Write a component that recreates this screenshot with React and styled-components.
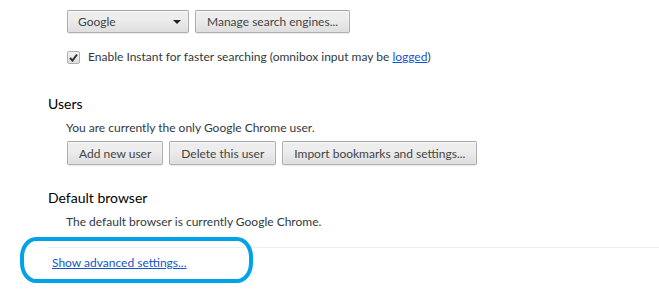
import React from 'react';
import styled, { createGlobalStyle } from 'styled-components';

const Global = createGlobalStyle`
  body { margin: 0; background: #fff; }
  * { box-sizing: border-box; }
`;

const Page = styled.div`
  position: relative;
  width: 659px;
  height: 297px;
  overflow: hidden;
  font-family: Lato, "Noto Sans", sans-serif;
  font-size: 12px;
  color: #303942;
`;

const Shift = styled.div`
  margin-top: -15px;
`;

const Section = styled.section`
  padding-left: 48px;
  margin-top: ${(p) => p.gap || 0}px;
`;

const Heading = styled.h3`
  margin: 0;
  font-size: 14px;
  font-weight: normal;
  line-height: 18px;
  color: #000;
`;

const Content = styled.div`
  padding-left: 18px;
  margin-top: ${(p) => p.gap || 0}px;
`;

const Desc = styled.div`
  line-height: 16px;
`;

const Row = styled.div`
  display: flex;
  gap: ${(p) => p.gap || 6}px;
  margin-top: ${(p) => p.top || 0}px;
  padding-left: 1px;
`;

const Button = styled.button`
  height: ${(p) => p.h || 24}px;
  padding: 0 11px;
  font-family: inherit;
  font-size: 12px;
  color: #444;
  border: 1px solid rgba(0, 0, 0, 0.25);
  border-radius: 2px;
  background: linear-gradient(#ededed, #ededed 38%, #dedede);
  box-shadow: 0 1px 0 rgba(0, 0, 0, 0.08), inset 0 1px 2px rgba(255, 255, 255, 0.75);
`;

const Select = styled.div`
  display: flex;
  align-items: center;
  justify-content: space-between;
  width: 122px;
  height: 23px;
  padding: 0 7px 0 10px;
  color: #444;
  border: 1px solid rgba(0, 0, 0, 0.25);
  border-radius: 2px;
  background: linear-gradient(#ededed, #ededed 38%, #dedede);
  box-shadow: 0 1px 0 rgba(0, 0, 0, 0.08), inset 0 1px 2px rgba(255, 255, 255, 0.75);
`;

const Arrow = styled.span`
  width: 0;
  height: 0;
  border-left: 4px solid transparent;
  border-right: 4px solid transparent;
  border-top: 4px solid #222;
`;

const CheckRow = styled.label`
  display: flex;
  align-items: center;
  gap: 8px;
  margin-top: 16px;
  padding-left: 1px;
  line-height: 16px;
`;

const Box = styled.span`
  width: 13px;
  height: 13px;
  border: 1px solid #b0b0b0;
  border-radius: 2px;
  background: linear-gradient(#f4f4f4, #dedede);
  display: flex;
  align-items: center;
  justify-content: center;
`;

const Link = styled.a`
  color: #15c;
  text-decoration: underline;
  cursor: pointer;
`;

const Footer = styled.div`
  margin: 17px 0 0 48px;
  border-top: 1px solid #eee;
  padding: 7px 0 0 4px;
  line-height: 16px;
`;

const Highlight = styled.div`
  position: absolute;
  left: 20px;
  top: 237px;
  width: 233px;
  height: 46px;
  border: 4px solid #00a2e8;
  border-radius: 16px / 20px;
  pointer-events: none;
`;

export default function App() {
  return (
    <Page>
      <Global />
      <Shift>
        <Section>
          <Content>
            <Desc>Set which search engine is used when searching from the omnibox.</Desc>
            <Row top={9}>
              <Select>
                <span>Google</span>
                <Arrow />
              </Select>
              <Button h={23}>Manage search engines...</Button>
            </Row>
            <CheckRow>
              <Box>
                <svg width="9" height="9" viewBox="0 0 9 9">
                  <path d="M1 5 L3.5 7.5 L8 1.5" fill="none" stroke="#333" strokeWidth="2" />
                </svg>
              </Box>
              <span>
                Enable Instant for faster searching (omnibox input may be <Link>logged</Link>)
              </span>
            </CheckRow>
          </Content>
        </Section>
        <Section gap={30}>
          <Heading>Users</Heading>
          <Content gap={7}>
            <Desc>You are currently the only Google Chrome user.</Desc>
            <Row top={5}>
              <Button>Add new user</Button>
              <Button>Delete this user</Button>
              <Button>Import bookmarks and settings...</Button>
            </Row>
          </Content>
        </Section>
        <Section gap={24}>
          <Heading>Default browser</Heading>
          <Content gap={7}>
            <Desc>The default browser is currently Google Chrome.</Desc>
          </Content>
        </Section>
        <Footer>
          <Link>Show advanced settings...</Link>
        </Footer>
      </Shift>
      <Highlight />
    </Page>
  );
}
